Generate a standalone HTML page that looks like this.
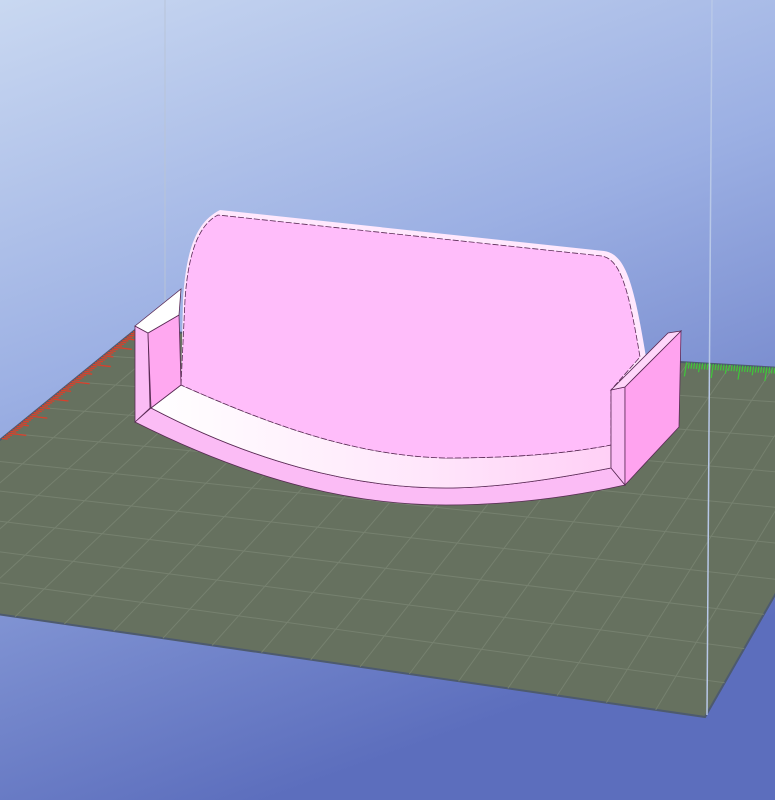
<!DOCTYPE html>
<html><head><meta charset="utf-8"><style>
html,body{margin:0;padding:0;width:775px;height:800px;overflow:hidden}
svg{display:block}
</style></head><body>
<svg id="s" width="775" height="800" viewBox="0 0 775 800" xmlns="http://www.w3.org/2000/svg">
<defs>
<linearGradient id="bg" x1="0" y1="0" x2="0.35" y2="1">
<stop offset="0" stop-color="#c9d8f1"/>
<stop offset="0.45" stop-color="#9bafe3"/>
<stop offset="1" stop-color="#5c6ebd"/>
</linearGradient>
<linearGradient id="floor" x1="0" y1="0" x2="1" y2="0">
<stop offset="0" stop-color="#ffffff"/>
<stop offset="0.6" stop-color="#ffe6fb"/>
<stop offset="1" stop-color="#ffd0f6"/>
</linearGradient>
</defs>
<rect width="775" height="800" fill="url(#bg)"/>
<line x1="165" y1="0" x2="165" y2="330" stroke="#b8c4d8" stroke-width="1"/>
<polygon points="135,330 901,375 705,717 -182,588" fill="#66715f" stroke="#4d5a6e" stroke-width="2"/>
<g id="grid" stroke="#76816f" stroke-width="1"></g>
<g id="ticks"></g>
<line x1="712" y1="0" x2="707" y2="715" stroke="#b8c8e8" stroke-width="1.5"/>
<path d="M135,422 C260,485 360,505 446,505 C520,505 580,495 625,485 L611,468 C560,478 500,488 446,488 C350,488 250,460 151,408 Z" fill="#fbbcf5" stroke="#5a2a55" stroke-width="0.8"/>
<path d="M151,408 C250,460 350,488 446,488 C500,488 560,478 611,468 L611,445 C560,455 500,458 446,458 C350,456 260,420 181,385 Z" fill="url(#floor)" stroke="#5a2a55" stroke-width="0.8"/>
<path d="M181,385 L183,300 C186,250 196,222 220,210 L604,251 C626,254 634,285 646,357 L611,390 L611,445 C560,455 500,458 446,458 C350,456 260,420 181,385 Z" fill="#ffe8fd"/>
<path d="M181,385 L185,300 C188,255 198,225 218,215 L602,256 C620,260 628,285 640,357 L611,390 L611,445 C560,455 500,458 446,458 C350,456 260,420 181,385 Z" fill="#ffbdfa" stroke="#5a2a55" stroke-width="0.8" stroke-dasharray="6 2"/>
<polygon points="135,326 148,333 150,408 135,422" fill="#fbbcf5" stroke="#5a2a55" stroke-width="0.8"/>
<polygon points="148,333 179,315 181,385 151,408" fill="#ffa8f0" stroke="#5a2a55" stroke-width="0.8"/>
<polygon points="135,326 181,289 179,315 148,333" fill="#ffffff" stroke="#5a2a55" stroke-width="0.8"/>
<polygon points="611,390 625,387 625,485 611,468" fill="#fbbcf5" stroke="#5a2a55" stroke-width="0.8"/>
<polygon points="625,387 681,331 679,427 625,485" fill="#ffa3ef" stroke="#5a2a55" stroke-width="0.8"/>
<polygon points="611,390 668,333 681,331 625,387" fill="#ffd6fa" stroke="#5a2a55" stroke-width="0.8"/>
</svg>
<script>
(function(){
var A=[135,330],B=[901,375],C=[705,717],D=[-182,588];
function P(u,v){var x=(1-u)*(1-v)*A[0]+u*(1-v)*B[0]+u*v*C[0]+(1-u)*v*D[0];
var y=(1-u)*(1-v)*A[1]+u*(1-v)*B[1]+u*v*C[1]+(1-u)*v*D[1];return [x,y];}
var g=document.getElementById('grid'),ns='http://www.w3.org/2000/svg',n=18,m=10;
function ln(p,q,el,c,w){var l=document.createElementNS(ns,'line');l.setAttribute('x1',p[0]);l.setAttribute('y1',p[1]);l.setAttribute('x2',q[0]);l.setAttribute('y2',q[1]);if(c){l.setAttribute('stroke',c);l.setAttribute('stroke-width',w);}el.appendChild(l);}
for(var i=1;i<n;i++){ln(P(i/n,0),P(i/n,1),g);}
for(var j=1;j<m;j++){ln(P(0,j/m),P(1,j/m),g);}
var t=document.getElementById('ticks');
for(var k=0;k<150;k++){var v=k/150;var p=P(0,v);if(p[0]<0)break;var L=(k%10==0)?18:(k%5==0?10:6);ln(p,[p[0]+L,p[1]+L*0.12],t,'#d8402c',1.3);}
for(var k=0;k<80;k++){var u=0.72+k*0.0035;var p=P(u,0);if(p[0]>775)break;var L=(k%10==0)?14:(k%5==0?9:6);ln(p,[p[0]-L*0.15,p[1]+L],t,'#3ec83a',1.2);}
})();
</script>
</body></html>
